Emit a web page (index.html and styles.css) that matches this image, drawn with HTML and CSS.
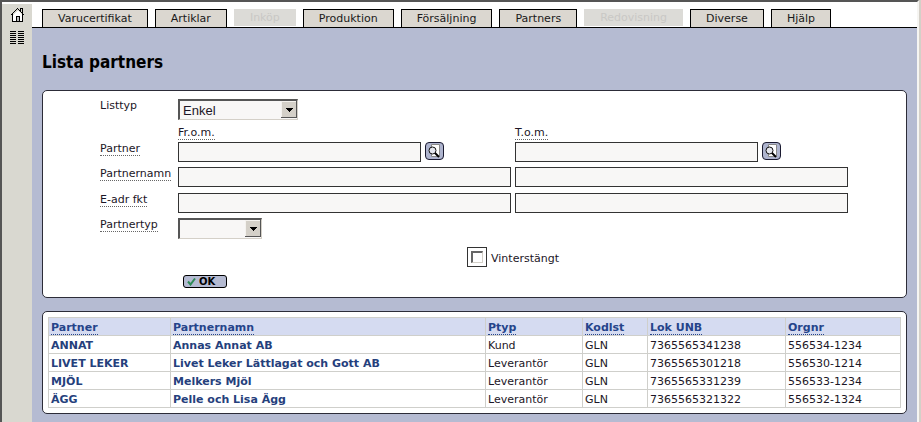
FILE: index.html
```html
<!DOCTYPE html>
<html lang="sv">
<head>
<meta charset="utf-8">
<title>Lista partners</title>
<link rel="stylesheet" href="styles.css">
</head>
<body>
<div class="app">
  <aside class="sidebar">
    <a href="#" aria-label="Hem"><svg width="15" height="15" viewBox="0 0 15 15" shape-rendering="crispEdges"><path d="M3 7 7.500 2.500 12 7v6.500H3z" fill="#fff"/><path d="M.5 7.500 7.500.5 14.500 7.500M10.500 3V.5h2V5M2.500 6v7.500h10V6M6.500 13V8.500h3V13" fill="none" stroke="#000"/><path d="M7 9h2v4H7z" fill="#bbb"/></svg></a>
    <a href="#" aria-label="Meny"><svg width="15" height="13" viewBox="0 0 15 13" shape-rendering="crispEdges"><path d="M0 .5h6M8 .5h6M0 2.500h6M8 2.500h6M0 4.500h6M8 4.500h6M0 6.500h6M8 6.500h6M0 8.500h6M8 8.500h6M0 10.500h6M8 10.500h6M0 12.500h6M8 12.500h6" stroke="#000"/></svg></a>
  </aside>
  <div class="content">
    <nav class="tabs">
      <a class="tab" href="#">Varucertifikat</a>
      <a class="tab" href="#">Artiklar</a>
      <span class="tab off">Inköp</span>
      <a class="tab" href="#">Produktion</a>
      <a class="tab" href="#">Försäljning</a>
      <a class="tab" href="#">Partners</a>
      <span class="tab off">Redovisning</span>
      <a class="tab" href="#">Diverse</a>
      <a class="tab" href="#">Hjälp</a>
    </nav>
    <main>
      <h1>Lista partners</h1>
      <form class="panel filter">
        <label class="name" for="listtyp">Listtyp</label>
        <span class="drop wide"><select id="listtyp"><option>Enkel</option></select><svg class="arrow" width="16" height="17" viewBox="0 0 16 17" shape-rendering="crispEdges"><path d="M0 0h16v17H0z" fill="#d4d0c8"/><path d="M.5 16V.5H15" fill="none" stroke="#f4f2ee"/><path d="M15.500 0v16.500H0" fill="none" stroke="#555"/><path d="M5 7h7v1H5zM6 8h5v1H6zM7 9h3v1H7zM8 10h1v1H8z"/></svg></span>
        <span class="from head"><span class="hint">Fr.o.m.</span></span>
        <span class="head"><span class="hint">T.o.m.</span></span>
        <label class="name" for="partner1"><span class="hint">Partner</span></label>
        <span class="lookup"><input type="text" id="partner1"><button type="button" class="find" aria-label="Sök partner från"><svg width="17" height="16" viewBox="0 0 17 16"><path d="M5.500 1.500h8v12h-8z" fill="#fff" stroke="#888"/><circle cx="6.500" cy="7.500" r="3.500" fill="#e4e6ee" stroke="#111"/><path d="m9 10 4 4" stroke="#000" stroke-width="2"/></svg></button></span>
        <span class="lookup"><input type="text" aria-label="Partner t.o.m."><button type="button" class="find" aria-label="Sök partner till"><svg width="17" height="16" viewBox="0 0 17 16"><path d="M5.500 1.500h8v12h-8z" fill="#fff" stroke="#888"/><circle cx="6.500" cy="7.500" r="3.500" fill="#e4e6ee" stroke="#111"/><path d="m9 10 4 4" stroke="#000" stroke-width="2"/></svg></button></span>
        <label class="name" for="namn1"><span class="hint">Partnernamn</span></label>
        <input type="text" id="namn1">
        <input type="text" aria-label="Partnernamn t.o.m.">
        <label class="name" for="eadr1"><span class="hint">E-adr fkt</span></label>
        <input type="text" id="eadr1">
        <input type="text" aria-label="E-adr fkt t.o.m.">
        <label class="name" for="ptyp"><span class="hint">Partnertyp</span></label>
        <span class="drop"><select id="ptyp"><option></option></select><svg class="arrow" width="16" height="17" viewBox="0 0 16 17" shape-rendering="crispEdges"><path d="M0 0h16v17H0z" fill="#d4d0c8"/><path d="M.5 16V.5H15" fill="none" stroke="#f4f2ee"/><path d="M15.500 0v16.500H0" fill="none" stroke="#555"/><path d="M5 7h7v1H5zM6 8h5v1H6zM7 9h3v1H7zM8 10h1v1H8z"/></svg></span>
        <label class="check"><span class="box"><input type="checkbox"></span><span class="caption">Vinterstängt</span></label>
        <button type="button" class="ok"><svg width="9" height="9" viewBox="0 0 9 9"><path d="m1 4.500 2.500 3L8 1.500" fill="none" stroke="#2e8b57" stroke-width="2"/></svg>OK</button>
      </form>
      <section class="panel list">
        <table>
          <colgroup><col class="c1"><col class="c2"><col class="c3"><col class="c4"><col class="c5"><col class="c6"></colgroup>
          <thead><tr><th><span class="hint">Partner</span></th><th><span class="hint">Partnernamn</span></th><th><span class="hint">Ptyp</span></th><th><span class="hint">Kodlst</span></th><th><span class="hint">Lok UNB</span></th><th><span class="hint">Orgnr</span></th></tr></thead>
          <tbody>
            <tr><td><a href="#">ANNAT</a></td><td><a href="#">Annas Annat AB</a></td><td>Kund</td><td>GLN</td><td>7365565341238</td><td>556534-1234</td></tr>
            <tr><td><a href="#">LIVET LEKER</a></td><td><a href="#">Livet Leker Lättlagat och Gott AB</a></td><td>Leverantör</td><td>GLN</td><td>7365565301218</td><td>556530-1214</td></tr>
            <tr><td><a href="#">MJÖL</a></td><td><a href="#">Melkers Mjöl</a></td><td>Leverantör</td><td>GLN</td><td>7365565331239</td><td>556533-1234</td></tr>
            <tr><td><a href="#">ÄGG</a></td><td><a href="#">Pelle och Lisa Ägg</a></td><td>Leverantör</td><td>GLN</td><td>7365565321322</td><td>556532-1324</td></tr>
          </tbody>
        </table>
      </section>
    </main>
  </div>
</div>
</body>
</html>
```
FILE: styles.css
```css
* { box-sizing: border-box; }
body {
  margin: 0;
  background: #d4d0c8;
  font: 11px/12px "DejaVu Sans", Verdana, sans-serif;
  color: #1c1626;
}
a { color: inherit; text-decoration: none; }
svg { display: block; }
.app {
  display: flex;
  min-height: 100vh;
  margin-right: 2px;
  border-top: 2px solid #555;
  border-left: 2px solid #555;
  border-right: 2px solid #f6f5f2;
  background: #fff;
}
.sidebar {
  display: flex;
  flex-direction: column;
  align-items: center;
  gap: 8px;
  width: 30px;
  margin-top: 2px;
  padding-top: 4px;
  background: #d9d8d0;
}
.content { flex: 1; display: flex; flex-direction: column; }
.tabs {
  display: flex;
  align-items: flex-start;
  gap: 7px;
  padding: 7px 10px 0;
  border-bottom: 1px solid #000;
}
.tab {
  height: 18px;
  padding: 3px 15px 0;
  border: 1px solid #000;
  border-bottom: 0;
  background: #dbd7d0;
  color: #1a1a1a;
}
.tab.off {
  height: 17px;
  padding-top: 2px;
  border-color: #dcdbd7;
  background: #dcdbd7;
  color: #c9c8c5;
}
main { flex: 1; padding: 24px 10px 8px; background: #b5bbd2; }
h1 {
  margin: 0 0 18px;
  font: bold 17px/20px "DejaVu Sans Condensed", "DejaVu Sans", sans-serif;
  color: #000;
}
.panel {
  border: 1px solid #2c2c38;
  border-radius: 5px;
  background: #fff;
}
.filter {
  display: grid;
  grid-template-columns: 74px 1fr 1fr;
  grid-template-rows: 27px 16px 25px 26px 25px 29px 28px 14px;
  column-gap: 4px;
  align-items: start;
  margin-bottom: 13px;
  padding: 8px 58px 8px 57px;
}
.name { grid-column: 1; padding-top: 1px; white-space: nowrap; }
.hint { display: inline-block; border-bottom: 1px dotted #666; }
.head { padding-top: 1px; }
.from { grid-column: 2; }
input[type="text"] {
  width: 100%;
  min-width: 0;
  height: 20px;
  margin: 0;
  padding: 0 4px;
  border: 1px solid #333;
  border-radius: 0;
  background: #f8f7f6;
}
.lookup { display: flex; gap: 4px; padding-right: 67px; }
.find {
  flex: none;
  width: 19px;
  height: 18px;
  padding: 0;
  border: 1px solid #1a1a30;
  border-radius: 4px;
  background: #aeb4ce;
}
.drop { position: relative; grid-column: 2 / -1; width: 84px; height: 21px; }
.drop.wide { width: 120px; }
.drop select {
  appearance: none;
  width: 100%;
  height: 100%;
  padding: 0 20px 0 3px;
  border: 2px solid #555;
  border-right: 1px solid #d4d0c8;
  border-bottom: 1px solid #d4d0c8;
  border-radius: 0;
  background: #f8f7f6;
  font: 13px "Liberation Sans", Arial, sans-serif;
  color: #1c1626;
}
.arrow { position: absolute; top: 2px; right: 1px; pointer-events: none; }
.check {
  grid-column: 2 / -1;
  justify-self: center;
  display: flex;
  align-items: center;
  gap: 4px;
}
.caption { padding-top: 4px; }
.box { padding: 3px; border: 1px solid #333; }
.box input {
  appearance: none;
  display: block;
  width: 12px;
  height: 12px;
  margin: 0;
  border: 2px solid #666;
  border-right: 1px solid #d4d0c8;
  border-bottom: 1px solid #d4d0c8;
}
.ok {
  grid-column: 2;
  display: flex;
  align-items: center;
  gap: 3px;
  width: 44px;
  height: 13px;
  margin-left: 5px;
  padding: 0 3px;
  border: 1px solid #000;
  border-radius: 3px;
  background: #b5bbd2;
  font: bold 10px/11px "DejaVu Sans", Verdana, sans-serif;
  color: #000;
}
.list { padding: 5px; }
table { width: 100%; border-collapse: collapse; table-layout: fixed; }
.c1 { width: 122px; }
.c2 { width: 315px; }
.c3 { width: 97px; }
.c4 { width: 65px; }
.c5 { width: 138px; }
th, td {
  height: 18px;
  padding: 4px 2px 0;
  border: 1px solid #cfcfcb;
  text-align: left;
  vertical-align: top;
  white-space: nowrap;
}
th { background: #d5dbf1; color: #25448a; }
th .hint { display: block; width: fit-content; border-color: #25448a; }
td a { font-weight: bold; color: #25407c; }
```
